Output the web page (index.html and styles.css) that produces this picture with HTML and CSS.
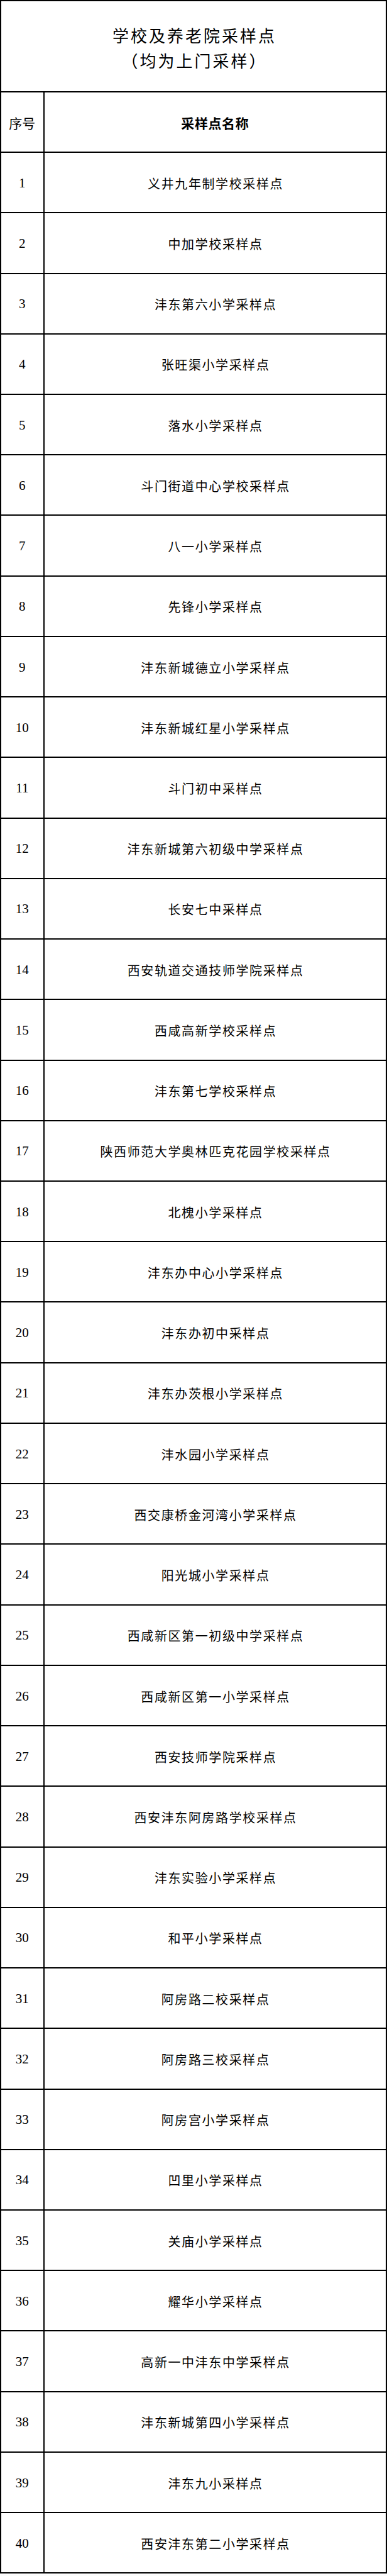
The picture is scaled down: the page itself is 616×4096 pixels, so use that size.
FILE: index.html
```html
<!DOCTYPE html>
<html lang="zh-CN">
<head>
<meta charset="utf-8">
<title>学校及养老院采样点</title>
<link rel="stylesheet" href="styles.css">
</head>
<body>
<div class="sheet">
  <div class="cell title"><span>学校及养老院采样点</span><span>（均为上门采样）</span></div>
  <div class="cell head-no">序号</div>
  <div class="cell head-name">采样点名称</div>
  <div class="cell no">1</div><div class="cell name">义井九年制学校采样点</div>
  <div class="cell no">2</div><div class="cell name">中加学校采样点</div>
  <div class="cell no">3</div><div class="cell name">沣东第六小学采样点</div>
  <div class="cell no">4</div><div class="cell name">张旺渠小学采样点</div>
  <div class="cell no">5</div><div class="cell name">落水小学采样点</div>
  <div class="cell no">6</div><div class="cell name">斗门街道中心学校采样点</div>
  <div class="cell no">7</div><div class="cell name">八一小学采样点</div>
  <div class="cell no">8</div><div class="cell name">先锋小学采样点</div>
  <div class="cell no">9</div><div class="cell name">沣东新城德立小学采样点</div>
  <div class="cell no">10</div><div class="cell name">沣东新城红星小学采样点</div>
  <div class="cell no">11</div><div class="cell name">斗门初中采样点</div>
  <div class="cell no">12</div><div class="cell name">沣东新城第六初级中学采样点</div>
  <div class="cell no">13</div><div class="cell name">长安七中采样点</div>
  <div class="cell no">14</div><div class="cell name">西安轨道交通技师学院采样点</div>
  <div class="cell no">15</div><div class="cell name">西咸高新学校采样点</div>
  <div class="cell no">16</div><div class="cell name">沣东第七学校采样点</div>
  <div class="cell no">17</div><div class="cell name">陕西师范大学奥林匹克花园学校采样点</div>
  <div class="cell no">18</div><div class="cell name">北槐小学采样点</div>
  <div class="cell no">19</div><div class="cell name">沣东办中心小学采样点</div>
  <div class="cell no">20</div><div class="cell name">沣东办初中采样点</div>
  <div class="cell no">21</div><div class="cell name">沣东办茨根小学采样点</div>
  <div class="cell no">22</div><div class="cell name">沣水园小学采样点</div>
  <div class="cell no">23</div><div class="cell name">西交康桥金河湾小学采样点</div>
  <div class="cell no">24</div><div class="cell name">阳光城小学采样点</div>
  <div class="cell no">25</div><div class="cell name">西咸新区第一初级中学采样点</div>
  <div class="cell no">26</div><div class="cell name">西咸新区第一小学采样点</div>
  <div class="cell no">27</div><div class="cell name">西安技师学院采样点</div>
  <div class="cell no">28</div><div class="cell name">西安沣东阿房路学校采样点</div>
  <div class="cell no">29</div><div class="cell name">沣东实验小学采样点</div>
  <div class="cell no">30</div><div class="cell name">和平小学采样点</div>
  <div class="cell no">31</div><div class="cell name">阿房路二校采样点</div>
  <div class="cell no">32</div><div class="cell name">阿房路三校采样点</div>
  <div class="cell no">33</div><div class="cell name">阿房宫小学采样点</div>
  <div class="cell no">34</div><div class="cell name">凹里小学采样点</div>
  <div class="cell no">35</div><div class="cell name">关庙小学采样点</div>
  <div class="cell no">36</div><div class="cell name">耀华小学采样点</div>
  <div class="cell no">37</div><div class="cell name">高新一中沣东中学采样点</div>
  <div class="cell no">38</div><div class="cell name">沣东新城第四小学采样点</div>
  <div class="cell no">39</div><div class="cell name">沣东九小采样点</div>
  <div class="cell no">40</div><div class="cell name">西安沣东第二小学采样点</div>
</div>
</body>
</html>
```

FILE: styles.css
```css
html, body {
  margin: 0;
  padding: 0;
  background: #fff;
}

.sheet {
  width: 616px;
  box-sizing: border-box;
  display: grid;
  grid-template-columns: 68.6px 1fr;
  border-top: 2.4px solid #000;
  border-left: 2.4px solid #000;
  color: #000;
  font-family: "Noto Sans CJK SC", "Noto Sans", sans-serif;
}

.cell {
  box-sizing: border-box;
  height: 96.24px;
  border-right: 2.4px solid #000;
  border-bottom: 2.4px solid #000;
  display: flex;
  align-items: center;
  justify-content: center;
  text-align: center;
}

.title {
  grid-column: 1 / -1;
  height: 144.8px;
  flex-direction: column;
  padding-top: 6px;
  font-size: 26px;
  line-height: 40px;
  letter-spacing: 3px;
  text-indent: 3px;
}

.head-no {
  font-size: 21px;
  padding-top: 2px;
}

.head-name {
  font-size: 21px;
  font-weight: bold;
  letter-spacing: 0.6px;
  padding-top: 2px;
}

.no {
  font-family: "Liberation Serif", serif;
  font-size: 21px;
  padding-top: 2px;
}

.name {
  font-size: 20px;
  letter-spacing: 1.6px;
  text-indent: 1.6px;
  padding-top: 2px;
}
```
